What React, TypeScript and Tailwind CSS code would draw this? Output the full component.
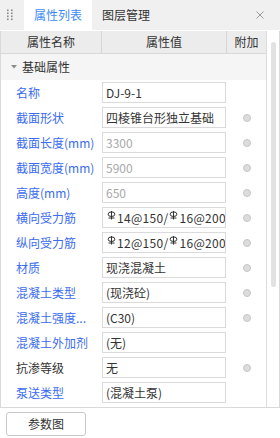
import React from "react";

type Row = {
  label: string;
  value: string;
  blue?: boolean;
  disabled?: boolean;
  dot?: boolean;
  rebar?: boolean;
};

const rows: Row[] = [
  { label: "名称", value: "DJ-9-1", blue: true },
  { label: "截面形状", value: "四棱锥台形独立基础", blue: true, dot: true },
  { label: "截面长度(mm)", value: "3300", blue: true, disabled: true, dot: true },
  { label: "截面宽度(mm)", value: "5900", blue: true, disabled: true, dot: true },
  { label: "高度(mm)", value: "650", blue: true, disabled: true, dot: true },
  { label: "横向受力筋", value: "14@150/|16@200", blue: true, dot: true, rebar: true },
  { label: "纵向受力筋", value: "12@150/|16@200", blue: true, dot: true, rebar: true },
  { label: "材质", value: "现浇混凝土", blue: true, dot: true },
  { label: "混凝土类型", value: "(现浇砼)", blue: true, dot: true },
  { label: "混凝土强度...", value: "(C30)", blue: true, dot: true },
  { label: "混凝土外加剂", value: "(无)", blue: true },
  { label: "抗渗等级", value: "无", blue: false, dot: true },
  { label: "泵送类型", value: "(混凝土泵)", blue: true },
];

function Rebar() {
  return (
    <svg width="9" height="10" viewBox="0 0 9 10" className="inline-block shrink-0 -mt-[3px] mr-[1px] ml-[1px]">
      <ellipse cx="4.5" cy="3.2" rx="3.4" ry="2.3" fill="none" stroke="#333" strokeWidth="1" />
      <line x1="4.5" y1="0" x2="4.5" y2="8.5" stroke="#333" strokeWidth="1" />
      <line x1="1.5" y1="7" x2="7.5" y2="7" stroke="#333" strokeWidth="1" />
    </svg>
  );
}

function Value({ r }: { r: Row }) {
  if (r.rebar) {
    const [a, b] = r.value.split("|");
    return (
      <span className="flex items-center whitespace-nowrap tracking-[0.3px]">
        <Rebar />
        <span>{a}</span>
        <Rebar />
        <span>{b}</span>
      </span>
    );
  }
  return <span className="whitespace-nowrap">{r.value}</span>;
}

export default function App() {
  return (
    <div
      className="w-[280px] h-[438px] bg-white flex flex-col text-[12px] text-[#333] overflow-hidden"
      style={{ fontFamily: '"Noto Sans CJK SC", "Noto Sans", sans-serif' }}
    >
      {/* Tab bar */}
      <div className="h-[30px] shrink-0 bg-[#f0f0f0] flex items-stretch border-b border-white box-content">
        <div className="w-[24px] flex items-center justify-center">
          <svg width="8" height="12" viewBox="0 0 8 12" className="-ml-[4px]">
            {[0, 3, 6, 9].map((y) => (
              <g key={y}>
                <rect x="1" y={y + 0.5} width="1.6" height="1.6" fill="#8a8a8a" />
                <rect x="5" y={y + 0.5} width="1.6" height="1.6" fill="#8a8a8a" />
              </g>
            ))}
          </svg>
        </div>
        <div className="w-[68px] bg-white flex items-center justify-center text-[#3d8af7]">属性列表</div>
        <div className="pl-[10px] flex items-center">图层管理</div>
        <div className="flex-1" />
        <div className="w-[26px] flex items-center justify-start pl-[2px]">
          <svg width="8" height="8" viewBox="0 0 8 8">
            <line x1="0.5" y1="0.5" x2="7.5" y2="7.5" stroke="#9a9a9a" strokeWidth="1" />
            <line x1="7.5" y1="0.5" x2="0.5" y2="7.5" stroke="#9a9a9a" strokeWidth="1" />
          </svg>
        </div>
      </div>

      {/* Panel body */}
      <div className="h-[377px] shrink-0 border-l border-r border-b border-[#d9d9d9] flex">
        <div className="w-[266px] flex flex-col border-r border-[#dcdcdc]">
          <div className="h-[23px] shrink-0 bg-[#ececec] border-b border-[#d8d8d8] flex">
            <div className="w-[101px] border-r border-[#d6d6d6] flex items-center justify-center">属性名称</div>
            <div className="w-[125px] border-r border-[#d6d6d6] flex items-center justify-center">属性值</div>
            <div className="flex-1 flex items-center justify-center">附加</div>
          </div>
          <div className="h-[26px] shrink-0 bg-[#f5f5f5] flex items-center">
            <svg width="6" height="4" viewBox="0 0 6 4" className="ml-[10px] mr-[5px]">
              <path d="M0 0 L6 0 L3 3.5 Z" fill="#8c8c8c" />
            </svg>
            <span>基础属性</span>
          </div>
          {rows.map((r) => (
            <div key={r.label} className="h-[25px] shrink-0 flex items-start">
              <div
                className={
                  "w-[101px] h-[25px] pl-[15px] flex items-center whitespace-nowrap " +
                  (r.blue ? "text-[#3a6cf0]" : "text-[#333]")
                }
              >
                {r.label}
              </div>
              <div
                className={
                  "mt-[2px] w-[124px] h-[21px] border border-[#dadada] bg-white pl-[3px] flex items-center overflow-hidden " +
                  (r.disabled ? "text-[#a8a8a8]" : "text-[#333]")
                }
              >
                <Value r={r} />
              </div>
              <div className="flex-1 h-[25px] flex items-center justify-center pl-[1px]">
                {r.dot && <div className="w-[8px] h-[8px] rounded-full bg-[#dcdcdc] border border-[#c6c6c6]" />}
              </div>
            </div>
          ))}
        </div>
        <div className="flex-1 bg-white pt-[11px] pl-[4px]">
          <div className="w-[5px] h-[245px] rounded-[3px] bg-[#e2e2e2]" />
        </div>
      </div>

      {/* Bottom */}
      <div className="pl-[6px] pt-[4px]">
        <button className="w-[80px] h-[24px] border border-[#c8c8c8] rounded-[3px] bg-white flex items-center justify-center text-[#333]">
          参数图
        </button>
      </div>
    </div>
  );
}
